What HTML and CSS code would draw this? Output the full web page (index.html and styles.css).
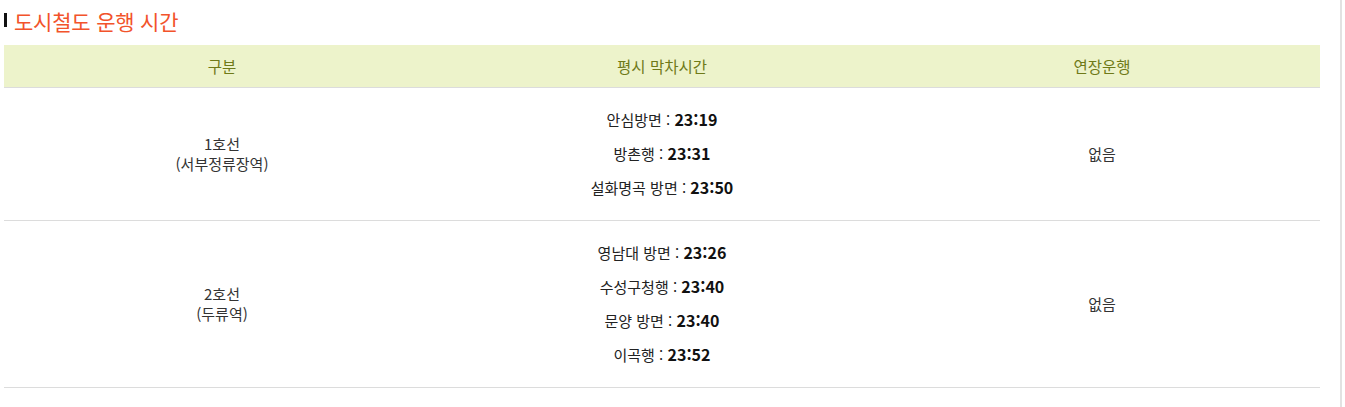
FILE: index.html
```html
<!DOCTYPE html>
<html lang="ko">
<head>
<meta charset="utf-8">
<title>도시철도 운행 시간</title>
<link rel="stylesheet" href="styles.css">
</head>
<body>
<div class="page">
  <h2 class="title">도시철도 운행 시간</h2>
  <table class="tbl">
    <colgroup><col class="c1"><col class="c2"><col class="c3"></colgroup>
    <thead>
      <tr><th>구분</th><th>평시 막차시간</th><th>연장운행</th></tr>
    </thead>
    <tbody>
      <tr>
        <td class="line">1호선<br>(서부정류장역)</td>
        <td class="times">
          <p>안심방면 : <b>23:19</b></p>
          <p>방촌행 : <b>23:31</b></p>
          <p>설화명곡 방면 : <b>23:50</b></p>
        </td>
        <td>없음</td>
      </tr>
      <tr>
        <td class="line">2호선<br>(두류역)</td>
        <td class="times">
          <p>영남대 방면 : <b>23:26</b></p>
          <p>수성구청행 : <b>23:40</b></p>
          <p>문양 방면 : <b>23:40</b></p>
          <p>이곡행 : <b>23:52</b></p>
        </td>
        <td>없음</td>
      </tr>
    </tbody>
  </table>
</div>
</body>
</html>
```

FILE: styles.css
```css
html, body {
  margin: 0;
  padding: 0;
  background: #fff;
}
body {
  font-family: "Noto Sans CJK KR", "Noto Sans", sans-serif;
  color: #333;
  font-size: 15px;
}
.page {
  min-height: 407px;
  padding: 0 0 0 4px;
  border-right: 2px solid #e2e2e2;
  box-sizing: border-box;
  width: 1342px;
}
.title {
  margin: 0;
  padding: 6px 0 0 10px;
  height: 38px;
  box-sizing: border-box;
  font-size: 21px;
  font-weight: normal;
  line-height: 30px;
  color: #f2532b;
  position: relative;
  letter-spacing: -0.2px;
}
.title::before {
  content: "";
  position: absolute;
  left: 0;
  top: 13px;
  width: 3px;
  height: 14px;
  background: #111;
}
.tbl {
  width: 1316px;
  margin-top: 7px;
  border-collapse: collapse;
  table-layout: fixed;
}
.c1 { width: 436px; }
.c2 { width: 444px; }
.c3 { width: 436px; }
.tbl th {
  background: #edf3cb;
  color: #6f7a18;
  font-weight: normal;
  font-size: 15.5px;
  height: 42px;
  padding: 0;
  border-bottom: 1px solid #dcdcdc;
}
.tbl td {
  text-align: center;
  vertical-align: middle;
  padding: 15px 0;
  border-bottom: 1px solid #dcdcdc;
  line-height: 20px;
  color: #333;
}
.tbl td.times p {
  margin: 0;
  height: 34px;
  line-height: 34px;
  color: #222;
}
.tbl td.times b {
  font-size: 16px;
  line-height: 1;
  font-weight: bold;
  color: #111;
}
```
